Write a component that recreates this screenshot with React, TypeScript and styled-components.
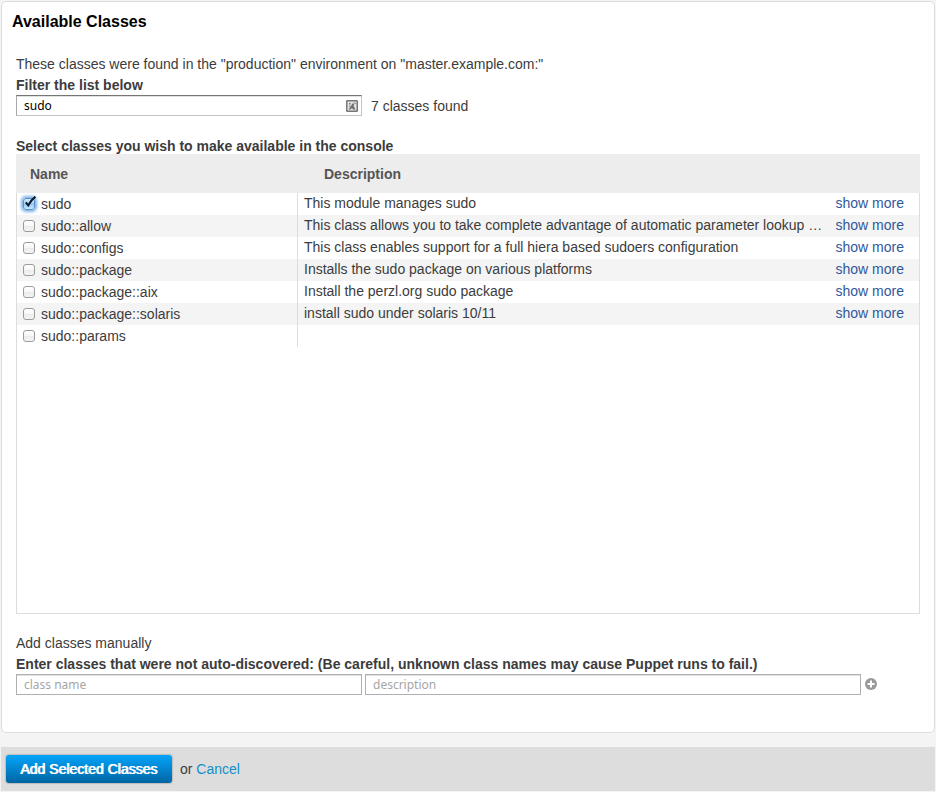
import React, { useState } from "react";
import styled, { createGlobalStyle } from "styled-components";

const GlobalStyle = createGlobalStyle`
  *, *::before, *::after { box-sizing: border-box; }
  body {
    margin: 0;
    background: #f4f4f4;
    color: #3c3c3c;
    font: 14px/20px "Liberation Sans", Arial, sans-serif;
  }
`;

const Page = styled.main`
  padding: 1px;
`;

const Panel = styled.section`
  padding: 10px 14px 37px;
  background: #fff;
  border: 1px solid #ddd;
  border-radius: 5px;
`;

const Title = styled.h1`
  margin: 0 -4px 22px;
  color: #000;
  font-size: 16px;
  line-height: 20px;
  font-weight: bold;
`;

const Text = styled.p`
  margin: 0;
`;

const Heading = styled.label`
  display: block;
  padding-top: 1px;
  line-height: 20px;
  font-weight: bold;
`;

const Subheading = styled.h2`
  margin: 22px 0 0;
  font-size: 14px;
  line-height: 16px;
  font-weight: bold;
`;

const TextField = styled.input`
  display: block;
  width: 100%;
  min-width: 0;
  height: 21px;
  margin: 0;
  padding: 0 7px;
  border: 1px solid #b0b0b0;
  border-radius: 0;
  background: #fff;
  box-shadow: inset 0 1px 0 #e2e2e2;
  color: #000;
  font: 12px "Noto Sans", "Open Sans", sans-serif;
  &::placeholder { color: #a6a6a6; opacity: 1; }
`;

const FilterRow = styled.div`
  display: flex;
  align-items: center;
  gap: 9px;
`;

const FilterBox = styled.div`
  position: relative;
  width: 346px;
  ${TextField} {
    padding-right: 24px;
    border-color: #757575 #c4c4c4 #c4c4c4 #a8a8a8;
  }
`;

const FieldIcon = styled.svg`
  position: absolute;
  top: 5px;
  right: 4px;
  width: 12px;
  height: 12px;
`;

const TableBox = styled.div`
  min-height: 460px;
  box-shadow: inset 0 0 0 1px #ddd;
`;

const Table = styled.table`
  width: 100%;
  table-layout: fixed;
  border-collapse: separate;
  border-spacing: 0;
`;

const NameCol = styled.col`
  width: 282px;
`;

const MoreCol = styled.col`
  width: 92px;
`;

const HeadCell = styled.th<{ $indent: number }>`
  height: 39px;
  padding: 0 0 0 ${(p) => p.$indent}px;
  background: #ededed;
  color: #555;
  text-align: left;
`;

const Row = styled.tr`
  &:nth-child(even) { background: #f4f4f4; }
`;

const NameCell = styled.td`
  height: 22px;
  padding: 0 0 0 6px;
  border: solid #ddd;
  border-width: 0 1px;
`;

const DescriptionCell = styled.td`
  padding: 0 0 2px 6px;
  overflow: hidden;
  text-overflow: ellipsis;
  white-space: nowrap;
`;

const MoreCell = styled.td`
  padding: 0 15px 2px 0;
  border-right: 1px solid #ddd;
  text-align: right;
`;

const CheckLabel = styled.label`
  display: flex;
  align-items: center;
  gap: 6px;
  height: 22px;
  line-height: 22px;
`;

const CheckWrap = styled.span`
  position: relative;
  width: 12px;
  height: 12px;
`;

const CheckInput = styled.input`
  display: block;
  appearance: none;
  width: 12px;
  height: 12px;
  margin: 0;
  border: 1px solid #9c9c9c;
  border-radius: 3px;
  background: linear-gradient(#fff, #f6f6f6 50%, #ebebeb 50%, #f4f4f4);
  &:checked {
    border-color: #5a8fcb;
    background: linear-gradient(#d5e9fa, #9bcbf4 55%, #c5ecff);
    box-shadow: 0 0 3px 2px #7fb2e4;
  }
`;

const CheckMark = styled.svg`
  position: absolute;
  left: 0;
  bottom: 0;
  width: 14px;
  height: 15px;
  pointer-events: none;
`;

const Link = styled.a<{ $bright?: boolean }>`
  color: ${(p) => (p.$bright ? "#148fc8" : "#2f589c")};
  text-decoration: none;
`;

const Manual = styled.div`
  margin-top: 19px;
`;

const ManualRow = styled.div`
  display: grid;
  grid-template-columns: 346fr 496fr 56px;
  align-items: center;
  gap: 3px;
`;

const IconButton = styled.button`
  display: flex;
  width: 14px;
  height: 21px;
  padding: 0 1px 1px;
  align-items: center;
  border: 0;
  background: none;
  svg { width: 12px; height: 12px; flex: none; }
`;

const Footer = styled.footer`
  display: flex;
  align-items: center;
  gap: 8px;
  height: 44px;
  margin-top: 14px;
  padding: 0 5px;
  background: #ddd;
`;

const PrimaryButton = styled.button`
  height: 28px;
  padding: 0 15px 0 14px;
  border: 0;
  border-radius: 3px;
  background: linear-gradient(#04a4fb, #0065a2);
  box-shadow: 0 0 1px 1px rgba(0, 0, 0, 0.15);
  color: #fff;
  font: 14px "Liberation Sans", Arial, sans-serif;
  text-shadow: 1px 0 0 #fff;
`;

type ClassItem = { name: string; description?: string };

const classes: ClassItem[] = [
  { name: "sudo", description: "This module manages sudo" },
  {
    name: "sudo::allow",
    description:
      "This class allows you to take complete advantage of automatic parameter lookup …",
  },
  {
    name: "sudo::configs",
    description: "This class enables support for a full hiera based sudoers configuration",
  },
  { name: "sudo::package", description: "Installs the sudo package on various platforms" },
  { name: "sudo::package::aix", description: "Install the perzl.org sudo package" },
  { name: "sudo::package::solaris", description: "install sudo under solaris 10/11" },
  { name: "sudo::params" },
];

function ClassRow({ item, initial }: { item: ClassItem; initial: boolean }) {
  const [checked, setChecked] = useState(initial);
  return (
    <Row>
      <NameCell>
        <CheckLabel>
          <CheckWrap>
            <CheckInput
              type="checkbox"
              checked={checked}
              onChange={(e) => setChecked(e.target.checked)}
            />
            {checked && (
              <CheckMark viewBox="0 0 14 15" aria-hidden="true">
                <path d="M2.8 7.4 5.3 10.4Q8 5 12.4 1.6" fill="none" stroke="#0a1830" strokeWidth="2" />
              </CheckMark>
            )}
          </CheckWrap>
          {item.name}
        </CheckLabel>
      </NameCell>
      <DescriptionCell>{item.description}</DescriptionCell>
      <MoreCell>{item.description && <Link href="#more">show more</Link>}</MoreCell>
    </Row>
  );
}

export default function App() {
  const [filter, setFilter] = useState("sudo");
  const shown = classes.filter((c) => c.name.includes(filter));
  return (
    <>
      <GlobalStyle />
      <Page>
        <Panel>
          <Title>Available Classes</Title>
          <Text>
            These classes were found in the "production" environment on "master.example.com:"
          </Text>
          <Heading htmlFor="filter">Filter the list below</Heading>
          <FilterRow>
            <FilterBox>
              <TextField id="filter" value={filter} onChange={(e) => setFilter(e.target.value)} />
              <FieldIcon viewBox="0 0 12 12" aria-hidden="true">
                <rect x="0.75" y="0.75" width="10.5" height="10.5" rx="0.5" fill="#e4e4e4" stroke="#777" strokeWidth="1.5" />
                <path d="M3 3h1.5v1.5H3zM2.5 9.5 5 6l1.3-2.5h2L7.6 6l2 3.5H7L6 8 4.5 9.5z" fill="#707070" />
                <path d="M8.5 2.5 9.5 4M3 6l1.5.5" stroke="#707070" />
              </FieldIcon>
            </FilterBox>
            <span>{shown.length} classes found</span>
          </FilterRow>
          <Subheading>Select classes you wish to make available in the console</Subheading>
          <TableBox>
            <Table>
              <colgroup>
                <NameCol />
                <col />
                <MoreCol />
              </colgroup>
              <thead>
                <tr>
                  <HeadCell $indent={14}>Name</HeadCell>
                  <HeadCell $indent={26} colSpan={2}>
                    Description
                  </HeadCell>
                </tr>
              </thead>
              <tbody>
                {shown.map((c) => (
                  <ClassRow key={c.name} item={c} initial={c.name === "sudo"} />
                ))}
              </tbody>
            </Table>
          </TableBox>
          <Manual>
            <Text>Add classes manually</Text>
            <Heading htmlFor="class-name">
              Enter classes that were not auto-discovered: (Be careful, unknown class names may
              cause Puppet runs to fail.)
            </Heading>
            <ManualRow>
              <TextField id="class-name" placeholder="class name" />
              <TextField aria-label="Description" placeholder="description" />
              <IconButton type="button" aria-label="Add class">
                <svg viewBox="0 0 12 12" aria-hidden="true">
                  <circle cx="6" cy="6" r="6" fill="#999" />
                  <path d="M6 2.5v7M2.5 6h7" stroke="#fff" strokeWidth="2" />
                </svg>
              </IconButton>
            </ManualRow>
          </Manual>
        </Panel>
        <Footer>
          <PrimaryButton type="button">Add Selected Classes</PrimaryButton>
          <span>
            or{" "}
            <Link $bright href="#cancel">
              Cancel
            </Link>
          </span>
        </Footer>
      </Page>
    </>
  );
}
